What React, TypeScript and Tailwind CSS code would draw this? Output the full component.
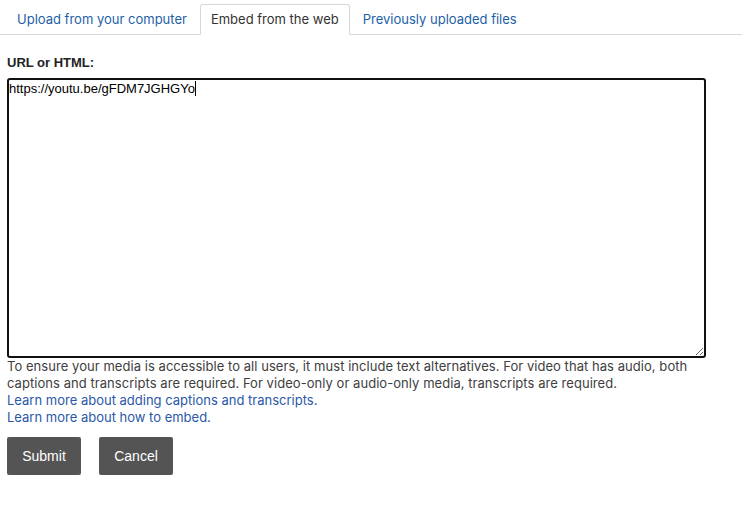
import React from 'react';

const tabs = [
  { label: 'Upload from your computer', active: false },
  { label: 'Embed from the web', active: true },
  { label: 'Previously uploaded files', active: false },
];

const url = 'https://youtu.be/gFDM7JGHGYo';

const App = () => {
  return (
    <div className="w-[745px] h-[520px] bg-white text-[#333] font-['Inter',sans-serif]">
      {/* tabs */}
      <div className="flex gap-[2px] pl-[6px] pt-[4px] w-[742px] border-b border-[#d7d7d7]">
        {tabs.map((t) => (
          <div
            key={t.label}
            className={
              t.active
                ? 'h-[31px] -mb-px px-[10px] flex items-center text-[13px] text-[#333] bg-white border border-[#d7d7d7] border-b-white rounded-t-[3px]'
                : 'h-[31px] -mb-px px-[10px] flex items-center text-[13px] text-[#1d5fa6] border border-transparent'
            }
          >
            {t.label}
          </div>
        ))}
      </div>

      <div className="pl-[7px] w-[706px]">
        <label className="block mt-[20px] text-[13px] leading-[16px] font-bold text-[#222] font-['Liberation_Sans',Arial,sans-serif]">
          URL or HTML:
        </label>

        <div className="relative mt-[7px]">
          <textarea
            readOnly
            value={url}
            className="block w-[699px] h-[280px] border-2 border-[#111] rounded-[3px] pl-0 pr-0 pt-[1px] text-[13px] leading-[15px] text-black outline-none font-['Liberation_Sans',Arial,sans-serif]"
          />
          {/* caret */}
          <div className="absolute left-[2px] top-[3px] pointer-events-none text-[13px] leading-[15px] text-transparent font-['Liberation_Sans',Arial,sans-serif]">
            {url}
            <span className="inline-block w-px h-[15px] bg-black align-top" />
          </div>
        </div>

        <div className="text-[13px] leading-[17px] tracking-[0.05px] text-[#404040]">
          To ensure your media is accessible to all users, it must include text alternatives. For video that has audio, both captions and transcripts are required. For video-only or audio-only media, transcripts are required.
        </div>
        <a className="block text-[13px] leading-[17px] text-[#2a58a8]">
          Learn more about adding captions and transcripts.
        </a>
        <a className="block text-[13px] leading-[17px] text-[#2a58a8]">
          Learn more about how to embed.
        </a>

        <div className="flex gap-[18px] mt-[11px]">
          <button className="w-[74px] h-[38px] bg-[#545454] text-white text-[14px] rounded-[2px] font-['Liberation_Sans',Arial,sans-serif]">
            Submit
          </button>
          <button className="w-[74px] h-[38px] bg-[#545454] text-white text-[14px] rounded-[2px] font-['Liberation_Sans',Arial,sans-serif]">
            Cancel
          </button>
        </div>
      </div>
    </div>
  );
};

export default App;
